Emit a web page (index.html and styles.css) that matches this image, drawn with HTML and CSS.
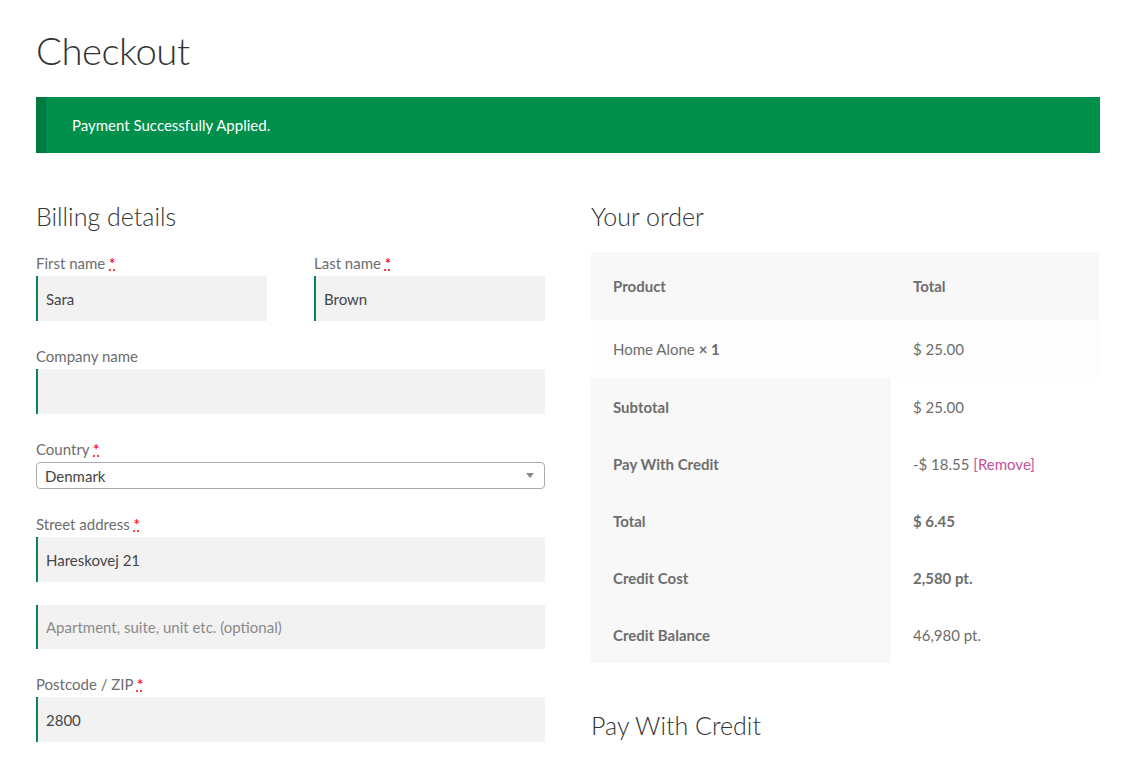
FILE: index.html
```html
<!DOCTYPE html>
<html>
<head>
<meta charset="utf-8">
<title>Checkout</title>
<link rel="stylesheet" href="styles.css">
</head>
<body>
<div class="page">
  <h1 class="title">Checkout</h1>
  <div class="notice">Payment Successfully Applied.</div>
  <div class="cols">
    <div class="billing">
      <h3 class="section-title">Billing details</h3>
      <div class="row-2">
        <div class="field">
          <label class="lbl">First name <abbr class="req">*</abbr></label>
          <div class="input">Sara</div>
        </div>
        <div class="field">
          <label class="lbl">Last name <abbr class="req">*</abbr></label>
          <div class="input">Brown</div>
        </div>
      </div>
      <div class="field">
        <label class="lbl">Company name</label>
        <div class="input"></div>
      </div>
      <div class="field">
        <label class="lbl">Country <abbr class="req">*</abbr></label>
        <div class="select"><span>Denmark</span><span class="arrow"></span></div>
      </div>
      <div class="field">
        <label class="lbl">Street address <abbr class="req">*</abbr></label>
        <div class="input">Hareskovej 21</div>
      </div>
      <div class="field">
        <div class="input placeholder short">Apartment, suite, unit etc. (optional)</div>
      </div>
      <div class="field">
        <label class="lbl">Postcode / ZIP <abbr class="req">*</abbr></label>
        <div class="input">2800</div>
      </div>
    </div>
    <div class="order">
      <h3 class="section-title">Your order</h3>
      <table class="order-table">
        <thead>
          <tr><th class="c1">Product</th><th class="c2">Total</th></tr>
        </thead>
        <tbody>
          <tr><td>Home Alone <strong class="qty">&times; 1</strong></td><td>$ 25.00</td></tr>
        </tbody>
        <tfoot>
          <tr><th>Subtotal</th><td>$ 25.00</td></tr>
          <tr><th>Pay With Credit</th><td>-$ 18.55 <a class="remove">[Remove]</a></td></tr>
          <tr><th>Total</th><td><strong>$ 6.45</strong></td></tr>
          <tr><th>Credit Cost</th><td><strong>2,580 pt.</strong></td></tr>
          <tr><th>Credit Balance</th><td>46,980 pt.</td></tr>
        </tfoot>
      </table>
      <h3 class="section-title pay-title">Pay With Credit</h3>
    </div>
  </div>
</div>
</body>
</html>
```
FILE: styles.css
```css
html, body {
  margin: 0;
  padding: 0;
  background: #fff;
}
body {
  font-family: Lato, "Liberation Sans", sans-serif;
  color: #6d6d6d;
  font-size: 15px;
  overflow: hidden;
}
.page {
  width: 1064px;
  margin-left: 36px;
  padding-top: 24px;
}
.title {
  margin: 0;
  font-size: 38.3px;
  line-height: 52px;
  font-weight: 300;
  color: #333;
  letter-spacing: -0.5px;
}
.notice {
  margin-top: 21px;
  height: 56px;
  box-sizing: border-box;
  background: #00904b;
  border-left: 10px solid #007a3f;
  color: #fff;
  padding-left: 26px;
  display: flex;
  align-items: center;
  font-size: 15px;
}
.cols {
  display: grid;
  grid-template-columns: 509px 508px;
  column-gap: 46px;
  margin-top: 46px;
}
.section-title {
  margin: 0;
  font-size: 25px;
  line-height: 34px;
  font-weight: 300;
  color: #333;
}
.billing .section-title {
  margin-bottom: 18px;
}
.row-2 {
  display: grid;
  grid-template-columns: 231px 231px;
  column-gap: 47px;
}
.field {
  margin-bottom: 23px;
}
.lbl {
  display: block;
  font-size: 15px;
  line-height: 20px;
  color: #6d6d6d;
  padding-top: 2px;
  margin-bottom: 3px;
}
.req {
  color: red;
  text-decoration: underline dotted;
  border: 0;
  font-weight: 600;
}
.input {
  height: 45px;
  box-sizing: border-box;
  background: #f2f2f2;
  border-left: 2px solid #0f834d;
  padding-left: 8px;
  display: flex;
  align-items: center;
  color: #43454b;
  font-size: 15px;
}
.input.short {
  height: 44px;
}
.input.placeholder {
  color: #8a8a8a;
}
.select {
  height: 27px;
  box-sizing: border-box;
  border: 1px solid #aaa;
  border-radius: 4px;
  background: #fff;
  display: flex;
  align-items: center;
  justify-content: space-between;
  padding: 0 8px 0 8px;
  color: #444;
  font-size: 15px;
}
.arrow {
  width: 0;
  height: 0;
  border-left: 4px solid transparent;
  border-right: 4px solid transparent;
  border-top: 5px solid #888;
  margin-right: 2px;
}
.order .section-title {
  margin-bottom: 19px;
}
.order-table {
  width: 508px;
  border-collapse: collapse;
  font-size: 15px;
}
.order-table th,
.order-table td {
  text-align: left;
  padding: 0 22px;
  vertical-align: middle;
}
.order-table thead th {
  background: #f8f8f8;
  height: 68px;
  font-weight: 700;
}
.order-table .c1 {
  width: 256px;
}
.order-table tbody td {
  background: #fdfdfd;
  height: 58px;
}
.order-table tfoot th {
  background: #f8f8f8;
  font-weight: 700;
  height: 57px;
}
.order-table tfoot td {
  background: #fff;
}
.qty {
  font-weight: 700;
}
.remove {
  color: #c4509c;
}
.pay-title {
  margin-top: 45px;
}
```
